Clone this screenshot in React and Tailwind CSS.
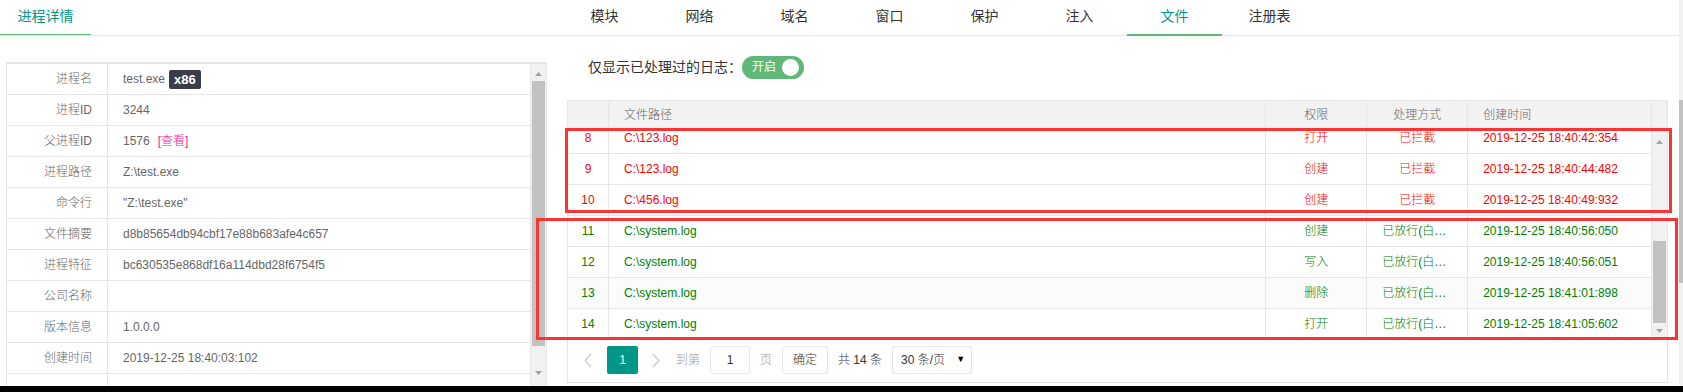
import React from "react";

const leftRows = [
  ["进程名", "name"],
  ["进程ID", "3244"],
  ["父进程ID", "parent"],
  ["进程路径", "Z:\\test.exe"],
  ["命令行", '"Z:\\test.exe"'],
  ["文件摘要", "d8b85654db94cbf17e88b683afe4c657"],
  ["进程特征", "bc630535e868df16a114dbd28f6754f5"],
  ["公司名称", ""],
  ["版本信息", "1.0.0.0"],
  ["创建时间", "2019-12-25 18:40:03:102"],
  ["", ""],
];

const tabs = ["模块", "网络", "域名", "窗口", "保护", "注入", "文件", "注册表"];

const fileRows = [
  { id: 8, path: "C:\\123.log", perm: "打开", action: "已拦截", time: "2019-12-25 18:40:42:354", blocked: true },
  { id: 9, path: "C:\\123.log", perm: "创建", action: "已拦截", time: "2019-12-25 18:40:44:482", blocked: true },
  { id: 10, path: "C:\\456.log", perm: "创建", action: "已拦截", time: "2019-12-25 18:40:49:932", blocked: true },
  { id: 11, path: "C:\\system.log", perm: "创建", action: "已放行(白名单)", time: "2019-12-25 18:40:56:050" },
  { id: 12, path: "C:\\system.log", perm: "写入", action: "已放行(白名单)", time: "2019-12-25 18:40:56:051" },
  { id: 13, path: "C:\\system.log", perm: "删除", action: "已放行(白名单)", time: "2019-12-25 18:41:01:898", hover: true },
  { id: 14, path: "C:\\system.log", perm: "打开", action: "已放行(白名单)", time: "2019-12-25 18:41:05:602" },
];

function UpArrow() {
  return (
    <svg width="7" height="4" viewBox="0 0 7 4">
      <path d="M0 4L3.5 0L7 4Z" fill="#a3a3a3" />
    </svg>
  );
}

function DownArrow() {
  return (
    <svg width="7" height="4" viewBox="0 0 7 4">
      <path d="M0 0L3.5 4L7 0Z" fill="#a3a3a3" />
    </svg>
  );
}

function Chevron({ dir }) {
  return (
    <svg width="8" height="15" viewBox="0 0 8 15">
      <path
        d={dir === "left" ? "M7 1L1 7.5L7 14" : "M1 1L7 7.5L1 14"}
        fill="none"
        stroke="#c9c9c9"
        strokeWidth="1.2"
      />
    </svg>
  );
}

function LeftValue({ value }) {
  if (value === "name") {
    return (
      <>
        test.exe
        <span className="ml-[4px] rounded-[2px] bg-[#393D49] px-[5px] text-[13px] leading-[19px] font-bold text-white">
          x86
        </span>
      </>
    );
  }
  if (value === "parent") {
    return (
      <>
        1576
        <span className="ml-[8px] text-[#f5258f]">[查看]</span>
      </>
    );
  }
  return value;
}

function ProcessPanel() {
  return (
    <div className="w-[557px] shrink-0">
      <div className="flex h-[36px] items-start border-b border-[#e6e6e6]">
        <div className="flex h-[36px] w-[91px] items-center justify-center border-b-2 border-[#5FB878] pb-[2px] text-[14px] font-normal text-[#009688]">
          进程详情
        </div>
      </div>

      <div className="pl-[6px] pt-[26px]">
        <div className="flex h-[340px] w-[541px] overflow-hidden border border-t-2 border-[#e6e6e6]">
          <div className="w-[523px]">
            {leftRows.map(([label, value], i) => (
              <div key={i} className="flex h-[31px] border-b border-[#e6e6e6] text-[12px] text-[#666]">
                <div className="flex w-[101px] items-center justify-end border-r border-[#e6e6e6] pr-[15px]">
                  {label}
                </div>
                <div className="flex flex-1 items-center pl-[15px]">
                  <LeftValue value={value} />
                </div>
              </div>
            ))}
          </div>
          <div className="flex w-[16px] flex-col items-center border-l border-[#e6e6e6] bg-[#f1f1f1]">
            <div className="mt-[8px]">
              <UpArrow />
            </div>
            <div className="mt-[5px] h-[265px] w-[13px] bg-[#c1c1c1]" />
            <div className="mt-[25px]">
              <DownArrow />
            </div>
          </div>
        </div>
      </div>
    </div>
  );
}

function FilePanel() {
  return (
    <div className="flex-1">
      <div className="flex h-[36px] items-start border-b border-[#e6e6e6] pl-[557px] font-normal">
        {tabs.map((t) => (
          <div
            key={t}
            className={
              t === "文件"
                ? "flex h-[36px] w-[95px] items-center justify-center border-b-2 border-[#5FB878] pb-[2px] text-[14px] text-[#009688]"
                : "flex h-[36px] w-[95px] items-center justify-center border-b-2 border-transparent pb-[2px] text-[14px] text-[#333]"
            }
          >
            {t}
          </div>
        ))}
      </div>

      <div className="ml-[588px] mt-[20px] flex h-[22px] items-center text-[14px] font-normal text-[#333]">
        仅显示已处理过的日志：
        <div className="flex h-[23px] w-[62px] items-center justify-between rounded-full bg-[#5FB878] pl-[10px] pr-[5px] text-[12px] text-white">
          开启
          <span className="h-[17px] w-[17px] rounded-full bg-white" />
        </div>
      </div>

      <div className="ml-[567px] mt-[22px] w-[1101px] border border-[#e6e6e6] text-[12px]">
        <div className="flex h-[28px] border-b border-[#e6e6e6] bg-[#f2f2f2] text-[#666]">
          <div className="w-[41px] border-r border-[#e6e6e6]" />
          <div className="flex w-[658px] items-center border-r border-[#e6e6e6] pl-[15px]">文件路径</div>
          <div className="flex w-[101px] items-center justify-center border-r border-[#e6e6e6]">权限</div>
          <div className="flex w-[101px] items-center justify-center border-r border-[#e6e6e6]">处理方式</div>
          <div className="flex w-[183px] items-center pl-[15px]">创建时间</div>
          <div className="w-[16px] border-l border-[#e6e6e6]" />
        </div>

        <div className="flex h-[210px]">
          <div className="h-[210px] w-[1083px] overflow-hidden">
            <div className="-mt-[6px]">
              {fileRows.map((r) => (
                <div
                  key={r.id}
                  className={
                    "flex h-[31px] border-b border-[#e6e6e6] " +
                    (r.blocked ? "text-[#ff0000] " : "text-[#008000] ") +
                    (r.hover ? "bg-[#fbfbfb]" : "bg-white")
                  }
                >
                  <div className="flex w-[41px] items-center justify-center border-r border-[#e6e6e6]">{r.id}</div>
                  <div className="flex w-[658px] items-center border-r border-[#e6e6e6] pl-[15px]">{r.path}</div>
                  <div className="flex w-[101px] items-center justify-center border-r border-[#e6e6e6]">{r.perm}</div>
                  <div className="w-[101px] truncate border-r border-[#e6e6e6] px-[15px] text-center leading-[30px]">
                    {r.action}
                  </div>
                  <div className="flex w-[183px] items-center pl-[15px]">{r.time}</div>
                </div>
              ))}
            </div>
          </div>
          <div className="flex w-[16px] flex-col items-center border-l border-[#e6e6e6] bg-[#f1f1f1]">
            <div className="mt-[11px]">
              <UpArrow />
            </div>
            <div className="mt-[97px] h-[82px] w-[13px] bg-[#c1c1c1]" />
            <div className="mt-[6px]">
              <DownArrow />
            </div>
          </div>
        </div>

        <div className="flex h-[43px] items-start border-t border-[#e6e6e6] pt-[6px] text-[#666]">
          <div className="ml-[10px] flex h-[28px] w-[20px] items-center justify-center">
            <Chevron dir="left" />
          </div>
          <div className="ml-[9px] flex h-[28px] w-[31px] items-center justify-center rounded-[2px] bg-[#009688] text-white">
            1
          </div>
          <div className="ml-[8px] flex h-[28px] w-[20px] items-center justify-center">
            <Chevron dir="right" />
          </div>
          <div className="ml-[10px] flex h-[28px] items-center text-[#999]">到第</div>
          <div className="ml-[10px] flex h-[28px] w-[40px] items-center justify-center rounded-[2px] border border-[#e6e6e6] text-[#333]">
            1
          </div>
          <div className="ml-[10px] flex h-[28px] items-center text-[#999]">页</div>
          <div className="ml-[10px] flex h-[28px] w-[46px] items-center justify-center rounded-[2px] border border-[#e6e6e6] text-[#333]">
            确定
          </div>
          <div className="ml-[10px] flex h-[28px] items-center text-[#333]">共 14 条</div>
          <div className="ml-[10px] flex h-[28px] w-[80px] items-center justify-between rounded-[2px] border border-[#e6e6e6] pl-[8px] pr-[6px] text-[#333]">
            30 条/页
            <span className="text-[9px] text-black">▼</span>
          </div>
        </div>
      </div>
    </div>
  );
}

export default function App() {
  return (
    <div className="relative h-[392px] w-[1683px] overflow-hidden bg-white font-['Liberation_Sans','Noto_Sans_CJK_SC',sans-serif] font-light">
      <div className="flex h-[386px] overflow-hidden">
        <div className="flex w-[1679px]">
          <ProcessPanel />
          <div className="-ml-[557px] flex-1">
            <FilePanel />
          </div>
        </div>
        <div className="w-[4px] bg-[#f1f1f1]">
          <div className="mt-[100px] h-[183px] bg-[#c1c1c1]" />
        </div>
      </div>
      <div className="h-[6px] bg-black" />

      {/* red annotation boxes */}
      <div className="absolute left-[565px] top-[128px] h-[85px] w-[1107px] border-[3px] border-[#fa3434]" />
      <div className="absolute left-[536px] top-[218px] h-[122px] w-[1142px] border-[3px] border-[#fa3434]" />
    </div>
  );
}
